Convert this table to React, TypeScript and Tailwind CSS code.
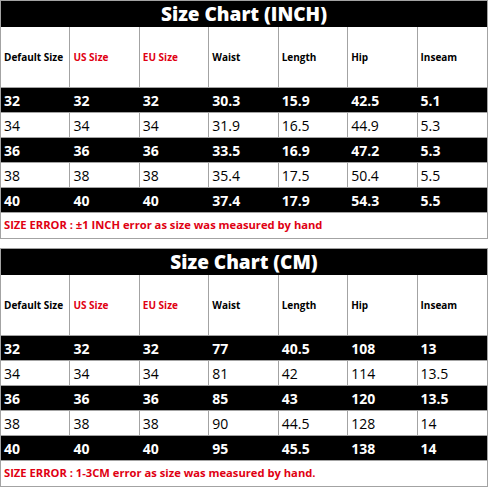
const headers = ["Default Size", "US Size", "EU Size", "Waist", "Length", "Hip", "Inseam"];

const inchRows = [
  ["32", "32", "32", "30.3", "15.9", "42.5", "5.1"],
  ["34", "34", "34", "31.9", "16.5", "44.9", "5.3"],
  ["36", "36", "36", "33.5", "16.9", "47.2", "5.3"],
  ["38", "38", "38", "35.4", "17.5", "50.4", "5.5"],
  ["40", "40", "40", "37.4", "17.9", "54.3", "5.5"],
];

const cmRows = [
  ["32", "32", "32", "77", "40.5", "108", "13"],
  ["34", "34", "34", "81", "42", "114", "13.5"],
  ["36", "36", "36", "85", "43", "120", "13.5"],
  ["38", "38", "38", "90", "44.5", "128", "14"],
  ["40", "40", "40", "95", "45.5", "138", "14"],
];

const SizeTable = ({ title, rows, note }: { title: string; rows: string[][]; note: string }) => (
  <div className="border border-[#a3a3a3] bg-white">
    <div className="flex h-[26px] items-center justify-center bg-black text-[19px] font-extrabold leading-none text-white">
      {title}
    </div>
    <div className="grid h-[61px] grid-cols-7 border-b border-[#a3a3a3]">
      {headers.map((h, i) => (
        <div
          key={h}
          className={`flex items-center pl-[3px] text-[10px] font-bold ${i < 6 ? "border-r border-[#a3a3a3]" : ""} ${
            i === 1 || i === 2 ? "text-[#e00012]" : "text-black"
          }`}
        >
          {h}
        </div>
      ))}
    </div>
    {rows.map((row, r) => {
      const dark = r % 2 === 0;
      return (
        <div
          key={r}
          className={`grid h-[25px] grid-cols-7 border-b border-[#a3a3a3] ${dark ? "bg-black text-white font-bold" : "bg-white text-black font-medium"}`}
        >
          {row.map((v, i) => (
            <div
              key={i}
              className={`flex items-center pl-[3px] text-[14px] ${i < 6 && !dark ? "border-r border-[#a3a3a3]" : ""}`}
            >
              {v}
            </div>
          ))}
        </div>
      );
    })}
    <div className="flex h-[25px] items-center pl-[3px] text-[11.2px] font-bold text-[#e00012]">{note}</div>
  </div>
);

export default function App() {
  return (
    <div className="w-[488px] h-[488px] bg-white" style={{ fontFamily: '"Open Sans", "Noto Sans", sans-serif' }}>
      <SizeTable
        title="Size Chart (INCH)"
        rows={inchRows}
        note="SIZE ERROR : ±1 INCH error as size was measured by hand"
      />
      <div className="h-[9px]" />
      <SizeTable
        title="Size Chart (CM)"
        rows={cmRows}
        note="SIZE ERROR : 1-3CM error as size was measured by hand."
      />
    </div>
  );
}
